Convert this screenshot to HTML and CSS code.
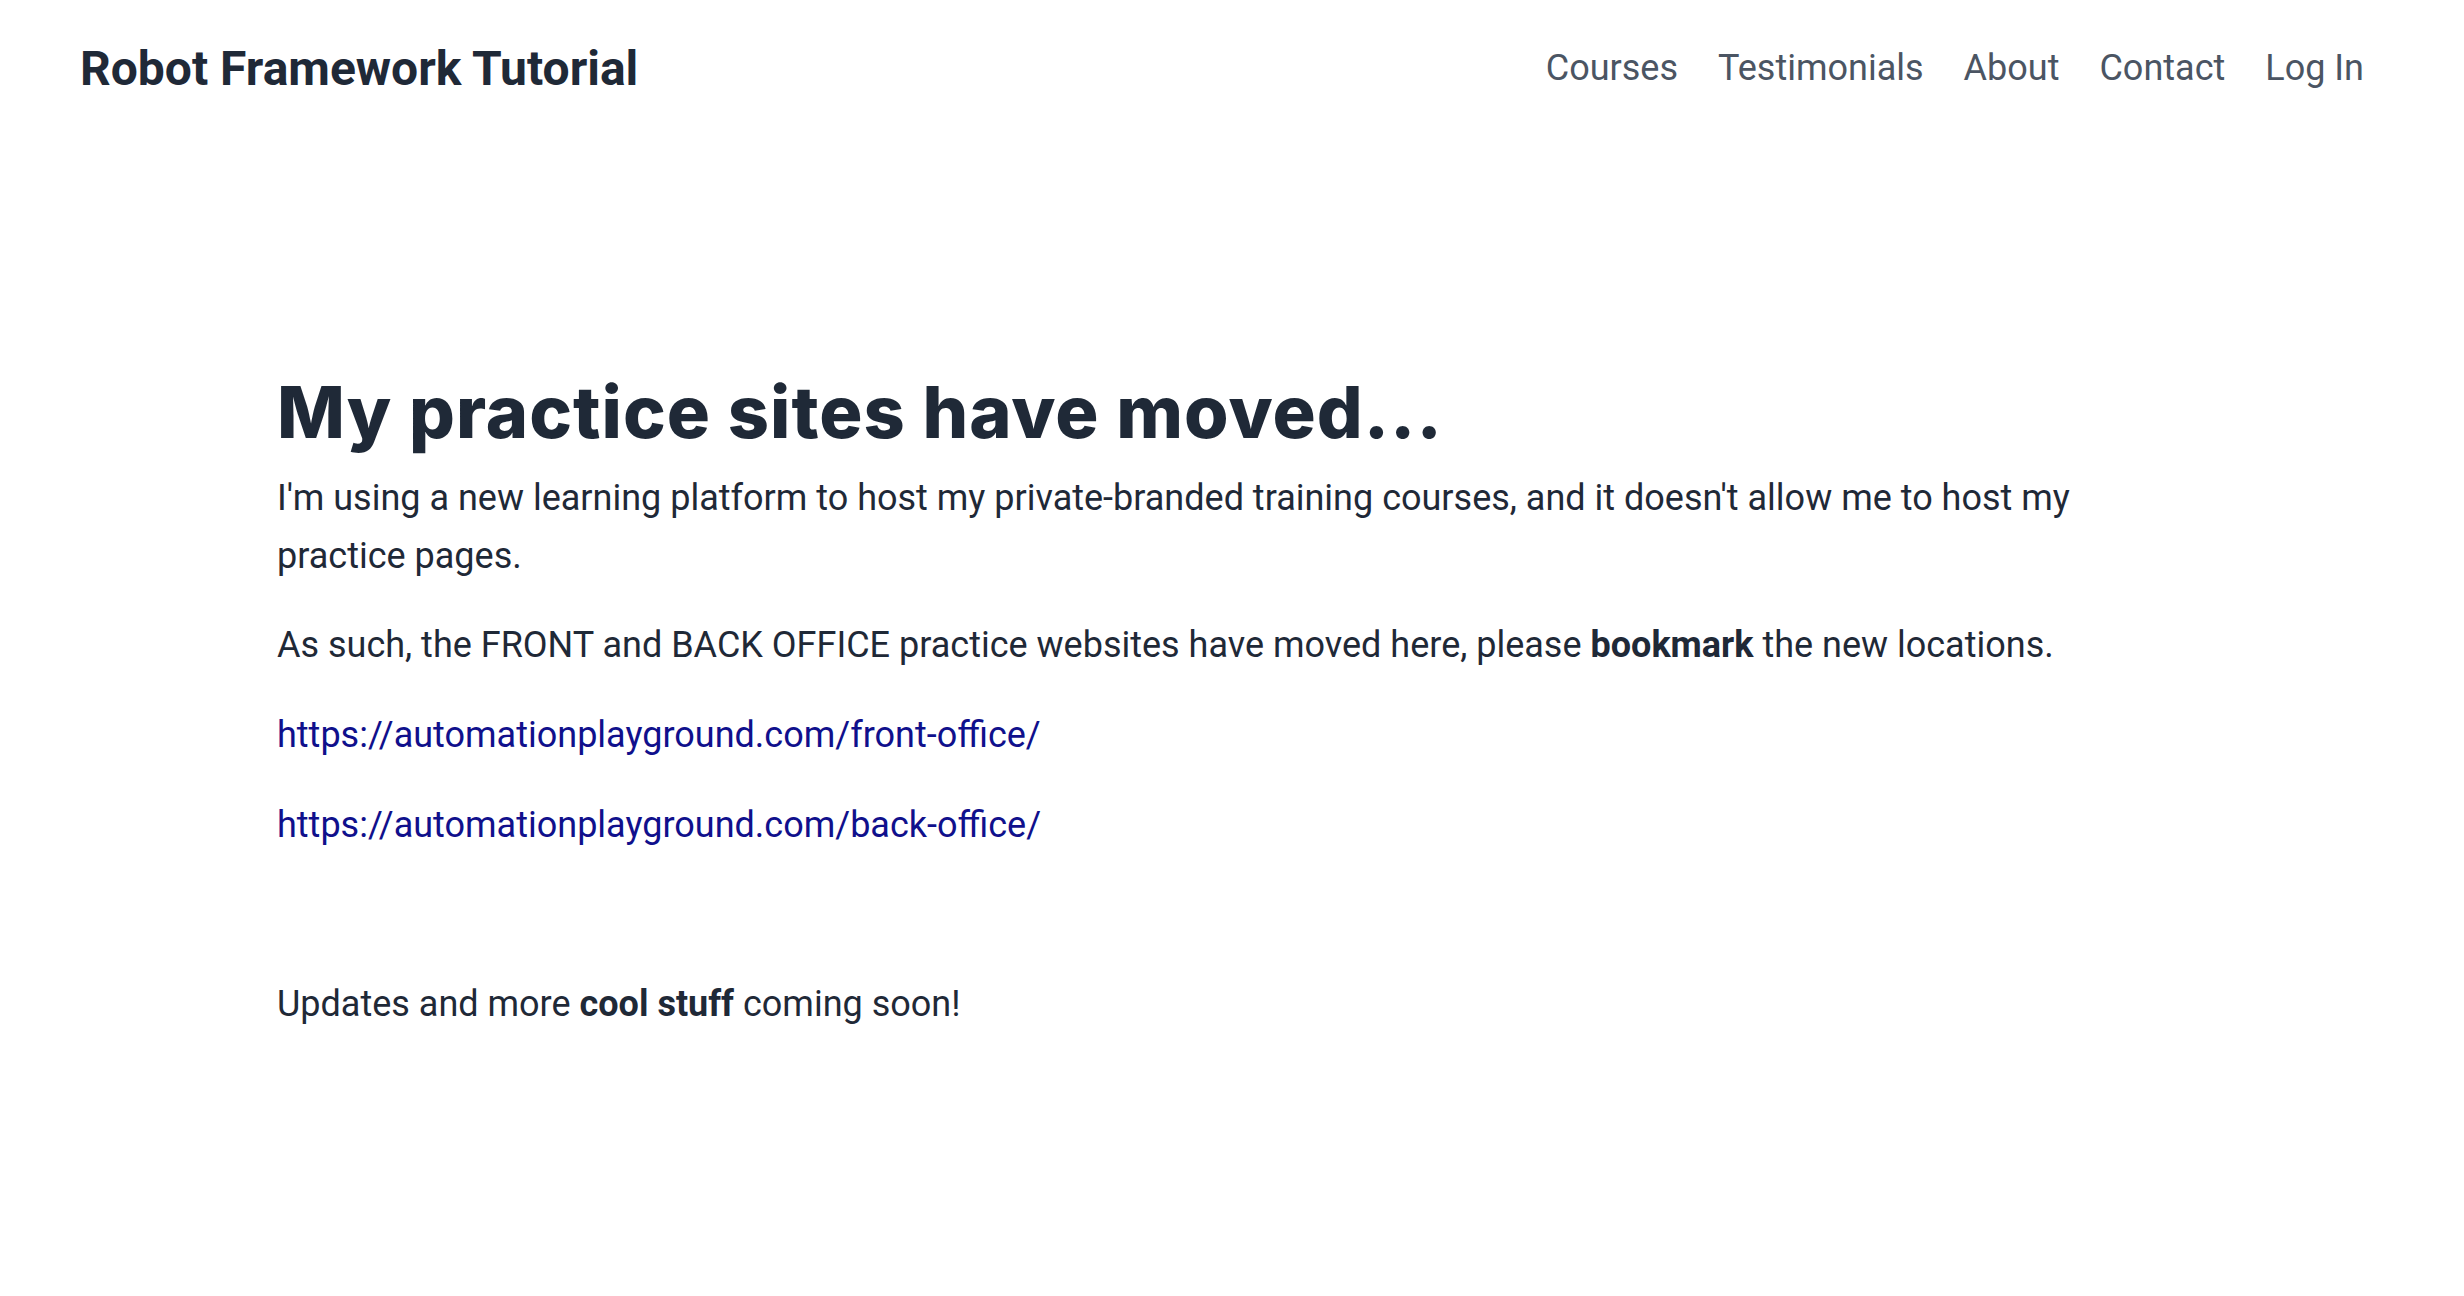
FILE: index.html
```html
<!DOCTYPE html>
<html lang="en">
<head>
<meta charset="utf-8">
<title>Robot Framework Tutorial</title>
<link rel="stylesheet" href="styles.css">
</head>
<body>
<header class="site-header">
  <div class="brand">Robot Framework Tutorial</div>
  <nav class="nav">
    <a href="#">Courses</a>
    <a href="#">Testimonials</a>
    <a href="#">About</a>
    <a href="#">Contact</a>
    <a href="#">Log In</a>
  </nav>
</header>
<main class="content">
  <h1 class="title">My practice sites have moved...</h1>
  <p>I'm using a new learning platform to host my private-branded training courses, and it doesn't allow me to host my practice pages.</p>
  <p>As such, the FRONT and BACK OFFICE practice websites have moved here, please <strong>bookmark</strong> the new locations.</p>
  <p><a class="link" href="#">https://automationplayground.com/front-office/</a></p>
  <p><a class="link" href="#">https://automationplayground.com/back-office/</a></p>
  <p>&nbsp;</p>
  <p>Updates and more <strong>cool stuff</strong> coming soon!</p>
</main>
</body>
</html>
```
FILE: styles.css
```css
html, body {
  margin: 0;
  padding: 0;
  background: #ffffff;
}
body {
  font-family: Roboto, "Liberation Sans", sans-serif;
  color: #1f2937;
}
.site-header {
  display: flex;
  justify-content: space-between;
  align-items: center;
  padding: 36px 100px 0 80px;
  height: 64px;
}
.brand {
  font-size: 48px;
  font-weight: 700;
  color: #1f2937;
}
.nav {
  display: flex;
  gap: 40px;
}
.nav a {
  font-size: 36px;
  color: #4b5563;
  text-decoration: none;
}
.content {
  padding: 272px 277px 0 277px;
}
.title {
  font-family: Inter, "Noto Sans", sans-serif;
  font-weight: 800;
  font-size: 72px;
  letter-spacing: 1px;
  line-height: 1.1;
  margin: 0 0 19px 0;
  color: #1f2937;
}
.content p {
  font-size: 36px;
  line-height: 1.6;
  margin: 0 0 32px 0;
}
.content strong {
  font-weight: 700;
}
.link {
  color: #10108c;
  text-decoration: none;
}
```
